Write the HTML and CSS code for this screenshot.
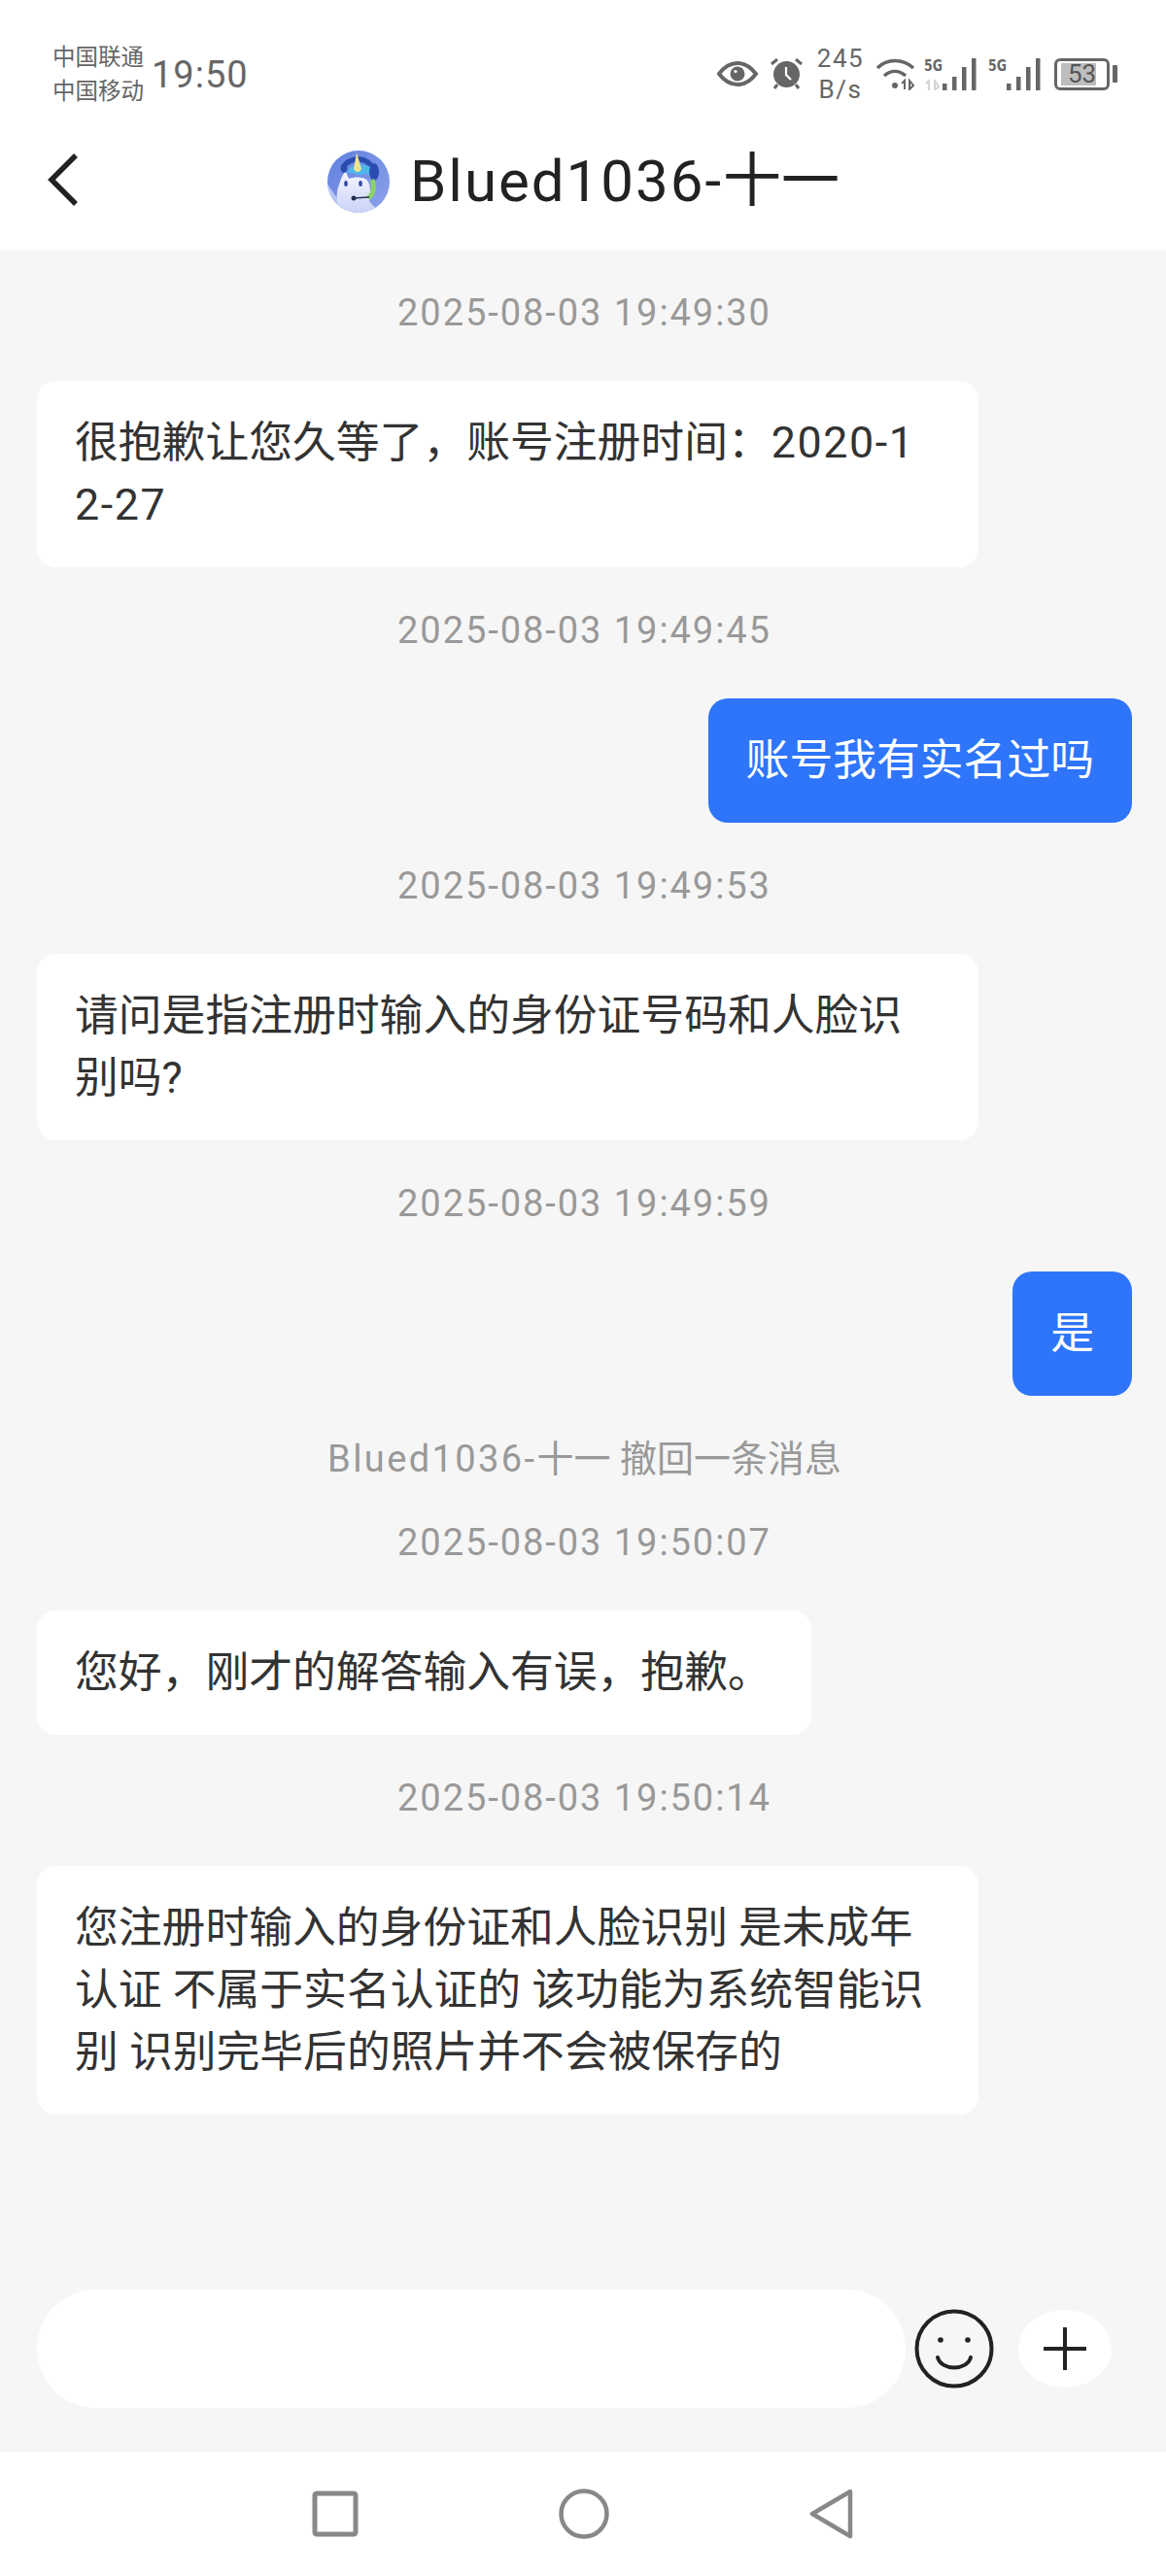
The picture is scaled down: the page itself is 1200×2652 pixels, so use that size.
FILE: index.html
```html
<!DOCTYPE html>
<html lang="zh-CN">
<head>
    <meta charset="UTF-8">
    <meta name="viewport" content="width=device-width, initial-scale=1.0">
    <link rel="stylesheet" href="styles.css">
    <title>Blued1036-十一</title>
</head>
<body>
    <div class="phone">
        <header class="top">
            <div class="statusbar">
                <div class="status-left">
                    <div class="carriers"><span>中国联通</span><span>中国移动</span></div>
                    <span class="clock">19:50</span>
                </div>
                <div class="status-right">
                    <svg class="ic-eye" width="42" height="26" viewBox="0 0 42 26">
                        <path d="M2 13C8 5 14 2 21 2s13 3 19 11c-6 8-12 11-19 11S8 21 2 13z" fill="none" stroke="#666" stroke-width="4"/>
                        <circle cx="21" cy="13" r="7.5" fill="#666"/>
                        <circle cx="19" cy="10.5" r="1.6" fill="#fff"/>
                    </svg>
                    <svg class="ic-alarm" width="33" height="32" viewBox="0 0 33 32">
                        <circle cx="16.500" cy="16.500" r="13.500" fill="#666"/>
                        <path d="M1 6l6-5M32 6l-6-5" stroke="#666" stroke-width="3" fill="none"/>
                        <path d="M7 27l-3 4M26 27l3 4" stroke="#666" stroke-width="3" fill="none"/>
                        <path d="M16 9v8l5 5" stroke="#fff" stroke-width="2.200" fill="none"/>
                    </svg>
                    <div class="netspeed"><span>245</span><span>B/s</span></div>
                    <svg class="ic-wifi" width="41" height="34" viewBox="0 0 41 34">
                        <path d="M1 11C11 1 27 1 38 11" fill="none" stroke="#666" stroke-width="3.500"/>
                        <path d="M8 19c7-6 15-6 22 0" fill="none" stroke="#666" stroke-width="3.500"/>
                        <circle cx="19" cy="29" r="3" fill="#666"/>
                        <path d="M29 33v-9l-3 3M34 24v9l4-4z" fill="none" stroke="#666" stroke-width="2"/>
                    </svg>
                    <div class="sim">
                        <span class="sim-label">5G</span>
                        <svg class="sim-arrows" width="17" height="11" viewBox="0 0 17 11">
                            <path d="M5 11V1L2 4M11 1v10l4-4z" fill="none" stroke="#d4d4d4" stroke-width="2"/>
                        </svg>
                        <svg class="sim-bars" width="35" height="33" viewBox="0 0 35 33">
                            <rect x="0" y="26" width="4.500" height="7" fill="#666"/>
                            <rect x="10" y="19" width="4.500" height="14" fill="#666"/>
                            <rect x="20" y="9" width="4.500" height="24" fill="#666"/>
                            <rect x="30" y="0" width="4.500" height="33" fill="#666"/>
                        </svg>
                    </div>
                    <div class="sim sim-second">
                        <span class="sim-label">5G</span>
                        <svg class="sim-bars" width="35" height="33" viewBox="0 0 35 33">
                            <rect x="0" y="26" width="4.500" height="7" fill="#666"/>
                            <rect x="10" y="19" width="4.500" height="14" fill="#666"/>
                            <rect x="20" y="9" width="4.500" height="24" fill="#666"/>
                            <rect x="30" y="0" width="4.500" height="33" fill="#666"/>
                        </svg>
                    </div>
                    <div class="battery">
                        <div class="battery-body">
                            <div class="battery-fill"></div>
                            <span class="battery-num">53</span>
                        </div>
                        <div class="battery-nub"></div>
                    </div>
                </div>
            </div>
            <div class="titlebar">
                <svg class="back" width="34" height="56" viewBox="0 0 34 56">
                    <path d="M30 3L5 28l25 25" fill="none" stroke="#222" stroke-width="5.500"/>
                </svg>
                <div class="title">
                    <svg class="avatar" width="66" height="66" viewBox="0 0 66 66">
                        <defs>
                            <clipPath id="av"><circle cx="33" cy="33" r="32"/></clipPath>
                            <linearGradient id="av-bg" x1="0" y1="0" x2="1" y2="1">
                                <stop offset="0" stop-color="#5f7fe0"/>
                                <stop offset="1" stop-color="#8ea3ea"/>
                            </linearGradient>
                            <linearGradient id="av-body" x1="0" y1="0" x2="0" y2="1">
                                <stop offset="0" stop-color="#f4f5fe"/>
                                <stop offset="1" stop-color="#c9d2f7"/>
                            </linearGradient>
                        </defs>
                        <g clip-path="url(#av)">
                            <rect width="66" height="66" fill="url(#av-bg)"/>
                            <path d="M0 34l22 32H0z" fill="#b9c6f4"/>
                            <path d="M16 66c-6-8-7-20-3-30 2-6 4-12 7-13l3 7c5-2 12-2 17 0 5 3 6 12 4 20-1 6 6 8 12 16z" fill="url(#av-body)"/>
                            <path d="M17 14c8-9 24-9 31 1l-4 3c-6-7-17-7-24 0z" fill="#2b4db0"/>
                            <ellipse cx="18" cy="19" rx="3.500" ry="5" fill="#2b4db0"/>
                            <path d="M21 24c2-9 20-12 27-3 1 3 0 5-1 7-6-6-9-1-14-2-5-1-8-3-12-2z" fill="#4fb6ea"/>
                            <path d="M28 20L31 3l5 17c-2 4-6 4-8 0z" fill="#efe48e"/>
                            <ellipse cx="49" cy="23" rx="5" ry="9" fill="#2b4db0"/>
                            <ellipse cx="20" cy="35" rx="1.800" ry="3" fill="#33489c"/>
                            <ellipse cx="35" cy="35" rx="1.800" ry="3" fill="#33489c"/>
                            <path d="M47 31c3 8 1 15-4 19" fill="none" stroke="#8ed06a" stroke-width="5"/>
                            <path d="M28 50l16-1" stroke="#26304f" stroke-width="1.500"/>
                            <circle cx="28" cy="50" r="2.500" fill="#26304f"/>
                        </g>
                    </svg>
                    <span class="title-text"><span class="title-latin">Blued1036-</span>十一</span>
                </div>
            </div>
        </header>

        <main class="chat">
            <div class="stamp">2025-08-03 19:49:30</div>
            <div class="row"><div class="bubble">很抱歉让您久等了&#xFF0C;账号注册时间&#xFF1A;<span class="num">2020-1</span><span class="num">2-27</span></div></div>

            <div class="stamp">2025-08-03 19:49:45</div>
            <div class="row row-me"><div class="bubble bubble-me">账号我有实名过吗</div></div>

            <div class="stamp">2025-08-03 19:49:53</div>
            <div class="row"><div class="bubble">请问是指注册时输入的身份证号码和人脸识别吗?</div></div>

            <div class="stamp">2025-08-03 19:49:59</div>
            <div class="row row-me"><div class="bubble bubble-me">是</div></div>

            <div class="notice"><span class="notice-latin">Blued1036-</span>十一 撤回一条消息</div>

            <div class="stamp stamp-after-notice">2025-08-03 19:50:07</div>
            <div class="row"><div class="bubble">您好&#xFF0C;刚才的解答输入有误&#xFF0C;抱歉。</div></div>

            <div class="stamp">2025-08-03 19:50:14</div>
            <div class="row"><div class="bubble">您注册时输入的身份证和人脸识别 是未成年认证 不属于实名认证的 该功能为系统智能识别 识别完毕后的照片并不会被保存的</div></div>
        </main>

        <div class="inputbar">
            <div class="input"></div>
            <svg class="smile" width="82" height="82" viewBox="0 0 82 82">
                <circle cx="41" cy="41" r="38.500" fill="none" stroke="#222" stroke-width="4"/>
                <circle cx="27" cy="32" r="2.800" fill="#222"/>
                <circle cx="55" cy="32" r="2.800" fill="#222"/>
                <path d="M24 50c4 14 30 14 34 0" fill="none" stroke="#222" stroke-width="4" stroke-linecap="round"/>
            </svg>
            <div class="plus">
                <svg width="44" height="44" viewBox="0 0 44 44">
                    <path d="M22 1v42M1 22h42" stroke="#222" stroke-width="4" stroke-linecap="round"/>
                </svg>
            </div>
        </div>

        <nav class="navkeys">
            <svg width="48" height="48" viewBox="0 0 48 48">
                <rect x="3" y="3" width="42" height="42" rx="2" fill="none" stroke="#888" stroke-width="5"/>
            </svg>
            <svg width="52" height="52" viewBox="0 0 52 52">
                <circle cx="26" cy="26" r="23.500" fill="none" stroke="#888" stroke-width="4.500"/>
            </svg>
            <svg width="46" height="52" viewBox="0 0 46 52">
                <path d="M42 3L3 26l39 23z" fill="none" stroke="#888" stroke-width="4.500" stroke-linejoin="round"/>
            </svg>
        </nav>
    </div>
</body>
</html>
```

FILE: styles.css
```css
* {
    box-sizing: border-box;
}

body {
    margin: 0;
    background: #fff;
    font-family: Roboto, "Noto Sans CJK SC", sans-serif;
}

.phone {
    width: 1200px;
    height: 2652px;
    display: flex;
    flex-direction: column;
    background: #f6f6f6;
    overflow: hidden;
}

/* top: status bar + title */
.top {
    height: 258px;
    background: #fff;
    flex-shrink: 0;
}

.statusbar {
    height: 130px;
    padding: 44px 50px 0 54px;
    display: flex;
    justify-content: space-between;
    color: #666;
}

.status-left {
    display: flex;
    align-items: center;
    height: 66px;
}

.carriers {
    display: flex;
    flex-direction: column;
    font-size: 23.500px;
    line-height: 35px;
    width: 102px;
}

.clock {
    font-size: 38px;
    letter-spacing: 1px;
}

.status-right {
    display: flex;
    align-items: center;
    height: 66px;
    margin-top: -1px;
}

.ic-eye {
    margin-right: 13px;
}

.ic-alarm {
    margin-right: 17px;
}

.netspeed {
    display: flex;
    flex-direction: column;
    align-items: center;
    width: 44px;
    font-size: 26px;
    line-height: 32px;
    letter-spacing: 1.500px;
    margin-right: 15px;
}

.ic-wifi {
    margin-right: 8px;
}

.sim {
    position: relative;
    width: 54px;
    height: 33px;
    margin-right: 12px;
}

.sim-second {
    margin-right: 14px;
}

.sim-label {
    position: absolute;
    left: 0;
    top: 0;
    font-family: "DejaVu Sans", sans-serif;
    font-size: 16px;
    font-weight: 700;
    line-height: 16px;
    transform: scaleX(0.78);
    transform-origin: left top;
}

.sim-arrows {
    position: absolute;
    left: 0;
    bottom: 0;
}

.sim-bars {
    position: absolute;
    right: 0;
    top: 0;
}

.battery {
    display: flex;
    align-items: center;
}

.battery-body {
    position: relative;
    width: 57px;
    height: 33px;
    border: 3px solid #666;
    border-radius: 6px;
}

.battery-fill {
    position: absolute;
    left: 4px;
    top: 2px;
    bottom: 2px;
    width: 36px;
    background: #bdbdbd;
}

.battery-num {
    position: absolute;
    left: 0;
    right: 0;
    top: 0;
    text-align: center;
    font-size: 26px;
    line-height: 27px;
    color: #555;
}

.battery-nub {
    width: 5px;
    height: 18px;
    margin-left: 3px;
    background: #666;
    border-radius: 1px;
}

.titlebar {
    position: relative;
    height: 128px;
    display: flex;
    align-items: center;
    justify-content: center;
}

.back {
    position: absolute;
    left: 48px;
    top: 27px;
}

.title {
    display: flex;
    align-items: center;
    gap: 20px;
    margin-bottom: 14px;
}

.title-text {
    font-size: 60px;
    color: #222;
    line-height: 76px;
}

.title-latin {
    letter-spacing: 2px;
}

/* chat */
.chat {
    flex: 1;
    padding: 38px 35px 0 38px;
    display: flex;
    flex-direction: column;
}

.stamp {
    height: 50px;
    line-height: 52px;
    margin-bottom: 46px;
    text-align: center;
    font-size: 38px;
    letter-spacing: 1.950px;
    color: #999;
}

.row + .stamp {
    margin-top: 39px;
}

.row {
    display: flex;
}

.row-me {
    justify-content: flex-end;
}

.bubble {
    max-width: 969px;
    padding: 32px 41px 32px 39px;
    background: #fff;
    border-radius: 20px;
    font-size: 44.800px;
    line-height: 64px;
    color: #333;
    word-break: break-all;
}

.num {
    letter-spacing: 1.600px;
}

.bubble-me {
    padding: 32px 39px;
    background: #2e75fa;
    color: #fff;
}

.notice {
    margin-top: 40px;
    height: 50px;
    line-height: 50px;
    text-align: center;
    font-size: 38px;
    color: #999;
}

.notice-latin {
    letter-spacing: 2.400px;
}

.stamp-after-notice {
    margin-top: 35px;
}

/* input */
.inputbar {
    height: 167px;
    flex-shrink: 0;
    padding: 0 36px 45px 38px;
    display: flex;
    align-items: center;
}

.input {
    width: 894px;
    height: 122px;
    background: #fff;
    border-radius: 61px;
    margin-right: 9px;
}

.smile {
    margin-right: 25px;
}

.plus {
    width: 96px;
    height: 80px;
    background: #fff;
    border-radius: 50%;
    display: flex;
    align-items: center;
    justify-content: center;
}

.navkeys {
    height: 128px;
    flex-shrink: 0;
    background: #fff;
    display: flex;
    justify-content: center;
    align-items: center;
    gap: 206px;
}
```
